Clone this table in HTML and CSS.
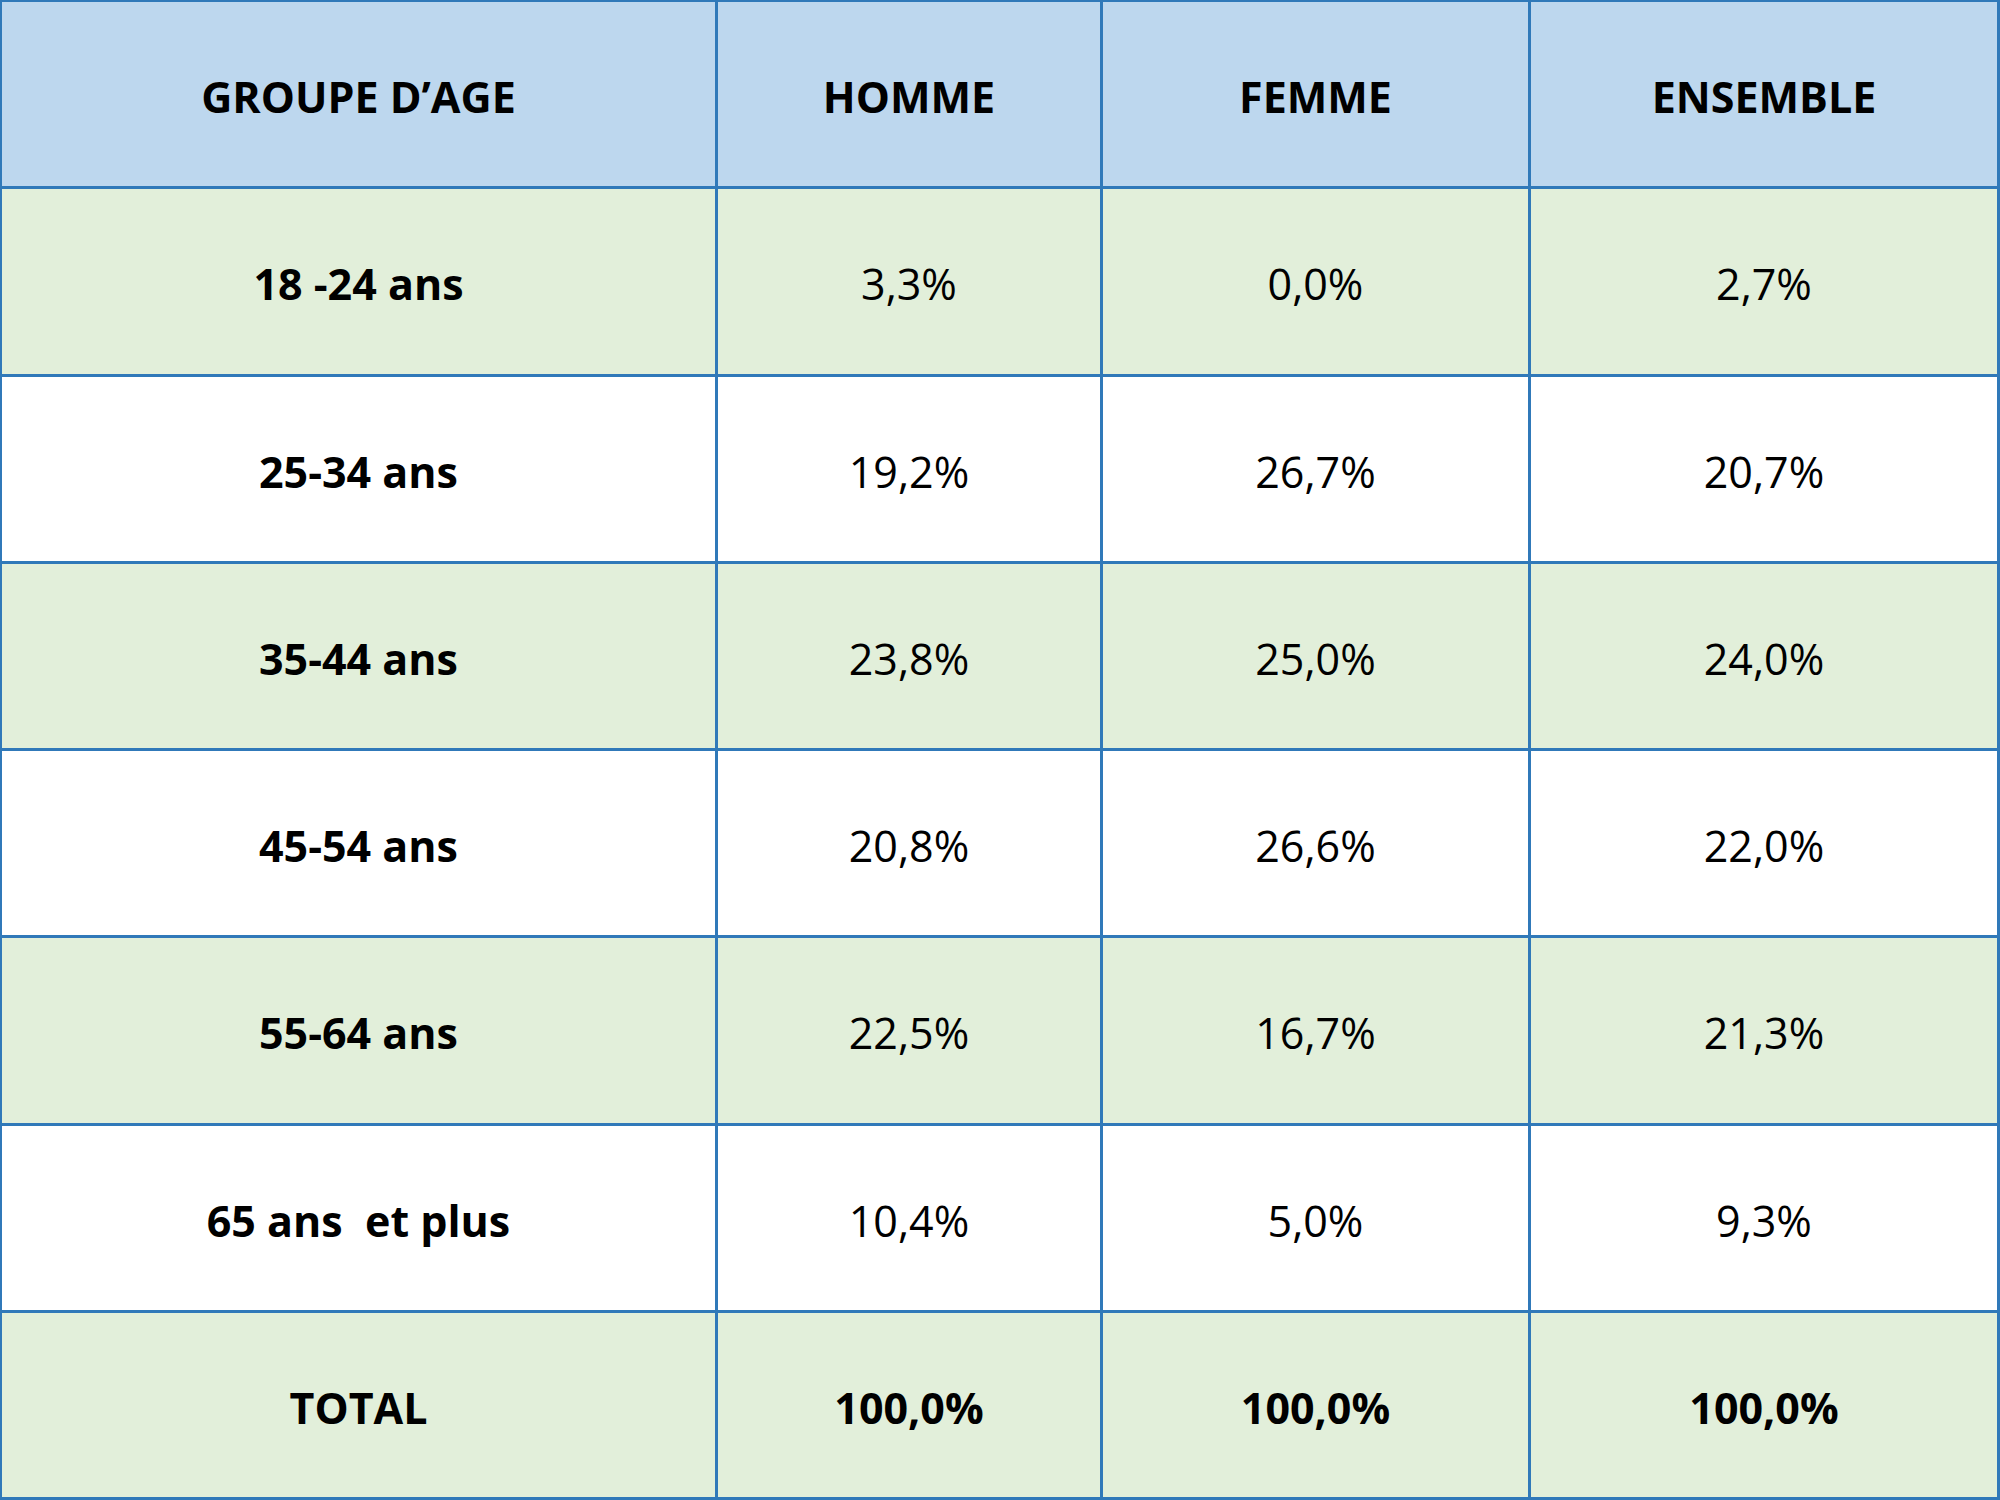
FILE: index.html
```html
<!DOCTYPE html>
<html lang="fr">
<head>
<meta charset="utf-8">
<title>Groupe d'âge</title>
<link rel="stylesheet" href="styles.css">
</head>
<body>
<div class="table">
  <div class="cell head">GROUPE D’AGE</div>
  <div class="cell head">HOMME</div>
  <div class="cell head">FEMME</div>
  <div class="cell head">ENSEMBLE</div>

  <div class="cell green label">18 -24 ans</div>
  <div class="cell green">3,3%</div>
  <div class="cell green">0,0%</div>
  <div class="cell green">2,7%</div>

  <div class="cell white label">25-34 ans</div>
  <div class="cell white">19,2%</div>
  <div class="cell white">26,7%</div>
  <div class="cell white">20,7%</div>

  <div class="cell green label">35-44 ans</div>
  <div class="cell green">23,8%</div>
  <div class="cell green">25,0%</div>
  <div class="cell green">24,0%</div>

  <div class="cell white label">45-54 ans</div>
  <div class="cell white">20,8%</div>
  <div class="cell white">26,6%</div>
  <div class="cell white">22,0%</div>

  <div class="cell green label">55-64 ans</div>
  <div class="cell green">22,5%</div>
  <div class="cell green">16,7%</div>
  <div class="cell green">21,3%</div>

  <div class="cell white label">65 ans&nbsp; et plus</div>
  <div class="cell white">10,4%</div>
  <div class="cell white">5,0%</div>
  <div class="cell white">9,3%</div>

  <div class="cell green label">TOTAL</div>
  <div class="cell green label">100,0%</div>
  <div class="cell green label">100,0%</div>
  <div class="cell green label">100,0%</div>
</div>
</body>
</html>
```

FILE: styles.css
```css
html, body {
  margin: 0;
  padding: 0;
  background: #ffffff;
}

.table {
  box-sizing: border-box;
  width: 2000px;
  height: 1500px;
  padding: 2px 3px 3px 2px;
  background: #3079b9;
  display: grid;
  grid-template-columns: 713px 382px 425px 466px;
  grid-template-rows: repeat(8, 1fr);
  gap: 3px;
  font-family: "Open Sans", "Liberation Sans", sans-serif;
  font-size: 43px;
  color: #000000;
}

.cell {
  display: flex;
  align-items: center;
  justify-content: center;
  padding-top: 5px;
  line-height: 1;
  white-space: pre;
}

.head {
  background: #bdd7ee;
  font-weight: 700;
}

.green {
  background: #e2efda;
}

.white {
  background: #ffffff;
}

.label {
  font-weight: 700;
}
```
